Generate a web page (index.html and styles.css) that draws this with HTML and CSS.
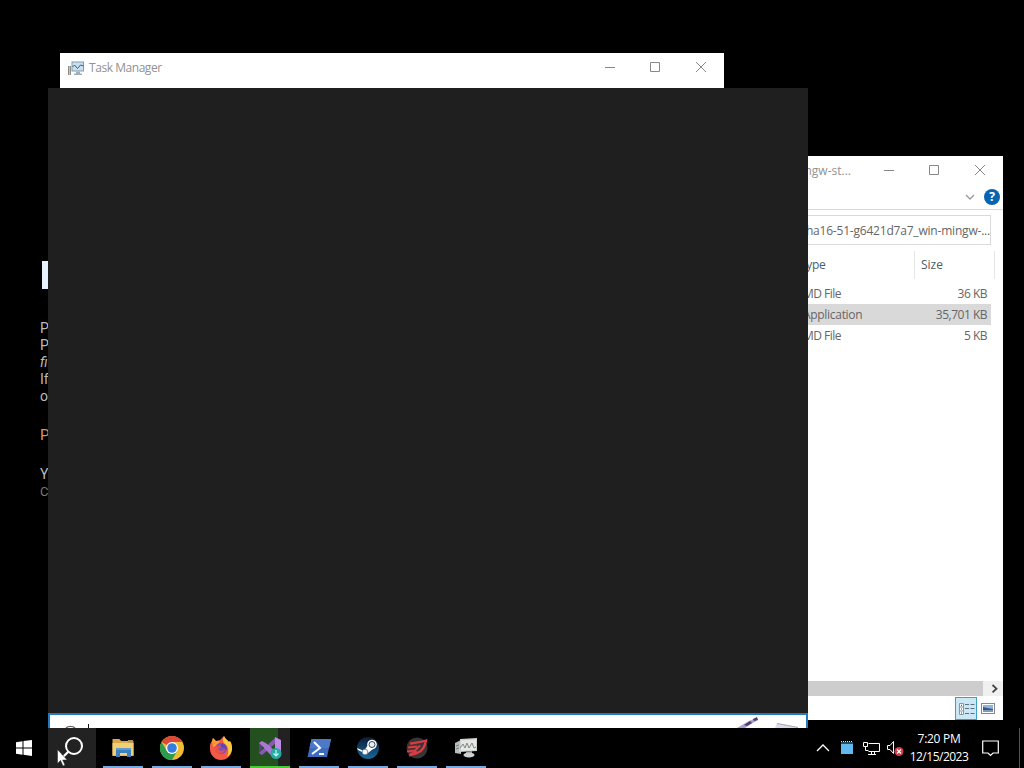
FILE: index.html
```
<!DOCTYPE html>
<html lang="en">
<head>
  <meta charset="UTF-8" />
  <title>Desktop</title>
  <link rel="stylesheet" href="styles.css">
</head>
<body>
  <div class="desktop">

    <div class="wallpaper-text">
      <div class="bar"></div>
      <p>P</p>
      <p>P</p>
      <p><i>fi</i></p>
      <p>If</p>
      <p>o</p>
      <p class="orange">P</p>
      <p class="yes">Y</p>
      <p class="dim">C</p>
    </div>

    <div class="window task-manager">
      <div class="titlebar">
        <svg class="app-icon" width="16" height="16" viewBox="0 0 16 16">
          <path d="M0 6h3v9H0z" fill="#c3c4bc"/><path d="M.5 6v9M2.500 6v9" stroke="#8c8d84"/>
          <rect x="4" y="2" width="11.500" height="9" fill="#c9dfef" stroke="#809bb2"/>
          <path d="M4.500 7l2-2 3 3.500 3-3.500 3 1" fill="none" stroke="#36617f"/>
          <path d="M8 11.500h4v2h2V15H6v-1.500h2z" fill="#a3adb8"/>
        </svg>
        <span class="title">Task Manager</span>
        <svg class="controls" width="105" height="14" viewBox="0 0 105 14">
          <path d="M1 6.500h10M46.500 1.500h9v9h-9zM92 1l10 10M102 1L92 11" fill="none" stroke="#888"/>
        </svg>
      </div>
    </div>

    <div class="window explorer">
      <div class="titlebar">
        <span class="title">mingw-st...</span>
        <svg class="controls" width="105" height="14" viewBox="0 0 105 14">
          <path d="M1 6.500h10M46.500 1.500h9v9h-9zM92 1l10 10M102 1L92 11" fill="none" stroke="#888"/>
        </svg>
      </div>
      <div class="ribbon">
        <svg width="10" height="8" viewBox="0 0 10 8"><path d="M1 2l4 4 4-4" fill="none" stroke="#999" stroke-width="1.300"/></svg>
        <span class="help">?</span>
      </div>
      <div class="address"><span>ha16-51-g6421d7a7_win-mingw-...</span></div>
      <div class="columns">
        <span class="type">Type</span>
        <span class="size">Size</span>
      </div>
      <div class="files">
        <div class="file"><span>MD File</span><span>36 KB</span></div>
        <div class="file selected"><span>Application</span><span>35,701 KB</span></div>
        <div class="file"><span>MD File</span><span>5 KB</span></div>
      </div>
      <div class="scrollbar">
        <div class="thumb"></div>
        <svg width="20" height="15" viewBox="0 0 20 15"><path d="M9.500 4l4 3.700-4 3.700" fill="none" stroke="#444" stroke-width="1.800"/></svg>
      </div>
      <div class="statusbar">
        <div class="view active">
          <svg width="20" height="20" viewBox="0 0 20 20">
            <path d="M3.500 4.500h4v11h-4zM3.500 8h4M3.500 12h4" fill="#fff" stroke="#8796a0"/>
            <path d="M5 6.300h1M5 10h1M5 14h1" stroke="#246"/>
            <path d="M9 5.500h4M14.500 5.500h4M9 9.500h4M14.500 9.500h4M9 14.500h4M14.500 14.500h4" stroke="#5d727d"/>
          </svg>
        </div>
        <div class="view">
          <svg width="14" height="12" viewBox="0 0 14 12">
            <rect x=".5" y=".5" width="13" height="10" fill="#fff" stroke="#888"/>
            <path d="M2 2h10v7H2z" fill="#8eb4e0"/><path d="M2 4l4 1 6 1v2H2z" fill="#36577e"/><path d="M2 7h10v2H2z" fill="#7e9bbb"/>
          </svg>
        </div>
      </div>
    </div>

    <div class="search-panel">
      <div class="search-box">
        <svg width="756" height="13" viewBox="0 0 756 13">
          <path d="M16 13a5 3 0 0 1 9 0" fill="none" stroke="#666" stroke-width="1.300"/>
          <path d="M38.500 9v4" stroke="#111"/>
          <path d="M687 13l12-7 7-3 2 2-7 4-6 4z" fill="#aaa0cc"/>
          <path d="M694 10l6-4 2 2-5 3zM703 4l4-2 1 3-4 1z" fill="#4d3d73"/>
          <path d="M727 8l21 4v1h-23z" fill="#dedceb"/><path d="M727 8.500l21 4" stroke="#a9a7b9"/>
        </svg>
      </div>
    </div>

    <div class="taskbar">
      <div class="start">
        <svg width="16" height="16" viewBox="0 0 16 16" fill="#fff"><path d="M0 2.300L6.500 1.300V7.500H0zM7.500 1.100L16 0V7.500H7.500zM0 8.500h6.500v6.200L0 13.700zM7.500 8.500H16V16l-8.500-1.200z"/></svg>
      </div>
      <div class="search">
        <svg width="48" height="40" viewBox="0 0 48 40"><circle cx="26" cy="18" r="8" fill="none" stroke="#fff" stroke-width="2"/><path d="M20.300 23.700L14 30" stroke="#fff" stroke-width="2.200"/></svg>
      </div>
      <div class="apps">
        <!-- file explorer -->
        <div class="app">
          <svg width="24" height="24" viewBox="0 0 24 24">
            <path d="M1.500 3h7l1.500 2h12.500v15h-21z" fill="#d9a94d"/>
            <path d="M1.500 7h21v12.500h-21z" fill="#f2cf72"/><path d="M17 4h5v2.500h-5z" fill="#a99465"/>
            <path d="M5 12h15v9h-4v-4H9v4H5z" fill="#3d80bd"/><path d="M5 12h15v2H5z" fill="#5b9fd0"/>
          </svg>
        </div>
        <!-- chrome -->
        <div class="app">
          <svg width="24" height="24" viewBox="0 0 24 24">
            <circle cx="12" cy="12" r="12" fill="#efbd32"/>
            <path d="M12 12L1.600 6A12 12 0 0 1 22.400 6H12z" fill="#dc493a"/>
            <path d="M1.600 6A12 12 0 0 0 12 24l5.200-9L12 18 6.800 15z" fill="#2b9c50"/>
            <circle cx="12" cy="12" r="6" fill="#fff"/><circle cx="12" cy="12" r="4.800" fill="#367ddd"/>
          </svg>
        </div>
        <!-- firefox -->
        <div class="app">
          <svg width="24" height="24" viewBox="0 0 24 24">
            <path d="M3 5l1-3 3 3 4-1 4-4c1 3 4 4 5 6l1-1c2 3 2 6 2 8A11 11 0 0 1 1 13C.6 9 1.500 7 3 5z" fill="#f35a43"/>
            <path d="M15 0c1 3 4 4 5 6l1-1c2 3 2 6 2 8a11 11 0 0 1-5 8c2-5 2-10-2-13-2-2-3-4-1-8z" fill="#ffc83e"/>
            <path d="M3 5l1-3 3 3 4 0-3 5-4 1z" fill="#ff9b32"/>
            <circle cx="12" cy="12.500" r="5.700" fill="#8050bd"/>
            <path d="M6 10c3 1 4-1 6 0l-3 3c2 3 5 2 7 0-1 5-7 6-10 2z" fill="#ee5046"/>
            <path d="M12 8c4-1 7 3 5 7-1-3-3-4-5-4z" fill="#6545ae"/>
          </svg>
        </div>
        <!-- visual studio installer -->
        <div class="app progress">
          <svg width="26" height="24" viewBox="0 0 26 24">
            <path d="M2 7v10l3 2V5z" fill="#5d3c85"/>
            <path d="M2 17l3 2L19 7V1z" fill="#8d58b5"/>
            <path d="M2 7l3-2c5 2 10 7 15 12l-3 5C11 17 8 12 2 7z" fill="#a978d2"/>
            <path d="M18 1l6 3v15l-6 3z" fill="#bf8be3"/>
            <circle cx="19" cy="17.500" r="5.500" fill="#27aaa5"/><path d="M19 14v6M16.500 17.500l2.500 2.500 2.500-2.500" fill="none" stroke="#bfffed" stroke-width="1.200"/>
          </svg>
        </div>
        <!-- powershell -->
        <div class="app">
          <svg width="24" height="24" viewBox="0 0 24 24">
            <path d="M4.500 3H24l-4 18H.5z" fill="#3f6bbd"/><path d="M4.500 3H24l-2 9H2.500z" fill="#4e79c9"/>
            <path d="M7 6l6 6-8 6M12 18h5" fill="none" stroke="#fff" stroke-width="2"/>
          </svg>
        </div>
        <!-- steam -->
        <div class="app">
          <svg width="24" height="24" viewBox="0 0 24 24">
            <defs><linearGradient id="steam" x2="0" y2="1"><stop stop-color="#0b1a35"/><stop offset="1" stop-color="#19689a"/></linearGradient></defs>
            <circle cx="12" cy="12" r="11" fill="url(#steam)"/>
            <path d="M1 12l7 3 4-6 5 4-5 4-2 1-8-4z" fill="#fff"/>
            <circle cx="16" cy="8.500" r="4.800" fill="#fff"/><circle cx="16" cy="8.500" r="3" fill="#e8eef5" stroke="#34475e"/>
            <circle cx="9" cy="16" r="2.800" fill="#fff" stroke="#5c7995" stroke-width=".8"/>
          </svg>
        </div>
        <!-- game launcher -->
        <div class="app">
          <svg width="24" height="24" viewBox="0 0 24 24">
            <circle cx="12" cy="12" r="10.500" fill="#393536"/>
            <path d="M5 7.500c6-1 10-1 16-3-1 6-3 10-8 12-3 2-6 2-9 3" fill="none" stroke="#dc3b43" stroke-width="2.300"/>
            <path d="M3 11.500l9-1M2 15.500l8-1 5-5M5 18l7-2" fill="none" stroke="#dc3b43" stroke-width="2"/>
          </svg>
        </div>
        <!-- task manager -->
        <div class="app">
          <svg width="24" height="24" viewBox="0 0 24 24">
            <path d="M1 7l6-3v14l-6-1z" fill="#b9bdba"/><path d="M2 10l3-1M2 13l3-1" stroke="#777"/>
            <path d="M6 3l17-1v13L5 16z" fill="#cdd1ce"/><path d="M7 4.500l15-1v10.500l-15 1z" fill="#e4e7e3"/>
            <path d="M6 12l3-4 2 4 2-5 2 5 3-5 2 5 2-1" fill="none" stroke="#7d8986"/>
            <path d="M12 16l6-1v3h-6z" fill="#969b98"/><ellipse cx="15" cy="19" rx="5.500" ry="2.500" fill="#cfd2cf"/>
          </svg>
        </div>
      </div>

      <div class="tray">
        <svg width="14" height="10" viewBox="0 0 14 10"><path d="M1 8l6-6 6 6" fill="none" stroke="#fff" stroke-width="1.300"/></svg>
        <svg width="12" height="14" viewBox="0 0 12 14"><path d="M0 1h12v12H0z" fill="#62b9ed"/><path d="M0 1h12v2H0z" fill="#244d68"/><path d="M0 .5h12" stroke="#bde7ff" stroke-dasharray="1 1"/></svg>
        <svg width="17" height="16" viewBox="0 0 17 16"><path d="M5.500 3.500h11v8h-11M.5 2.500h4v4h-4zM2.500 6.500v4h3M8.500 11.500v3M11.500 11.500v3M5 14.500h8" fill="none" stroke="#fff"/></svg>
        <svg width="17" height="16" viewBox="0 0 17 16"><path d="M.5 5.500H3l3.500-4v12L3 9.500H.5z" fill="none" stroke="#fff"/><circle cx="12" cy="11.500" r="4.500" fill="#d63b48"/><path d="M10 9.500l4 4M14 9.500l-4 4" stroke="#fff" stroke-width="1.200"/></svg>
      </div>
      <div class="clock">
        <div class="time">7:20 PM</div>
        <div class="date">12/15/2023</div>
      </div>
      <svg class="notifications" width="17" height="17" viewBox="0 0 17 17"><path d="M.7 1h15.600v12H11l-2.500 2.500L6 13H.7z" fill="none" stroke="#fff" stroke-width="1.200"/></svg>
      <div class="show-desktop"></div>
    </div>

    <svg class="cursor" width="12" height="18" viewBox="0 0 12 18"><path d="M.5.500v14l3-3 2.500 5.500 2-1-2.300-5h4.500z" fill="#fff" stroke="#222" stroke-width=".5"/></svg>
  </div>
</body>
</html>
```
FILE: styles.css
```
* {
  box-sizing: border-box;
}

body {
  margin: 0;
  background: #000;
  font-family: "Open Sans", "Noto Sans", sans-serif;
  font-size: 12px;
  overflow: hidden;
}

svg {
  display: block;
  flex: none;
}

.desktop {
  position: relative;
  width: 1024px;
  height: 768px;
  background: #000;
  overflow: hidden;
}

.wallpaper-text {
  position: absolute;
  left: 40px;
  top: 261px;
  width: 12px;
  font-family: Roboto, sans-serif;
  font-size: 14px;
  line-height: 17px;
  color: #bbb;
  white-space: nowrap;
}

.wallpaper-text .bar {
  width: 10px;
  height: 28px;
  margin: 0 0 31px 2px;
  background: #e8f2ff;
}

.wallpaper-text p {
  margin: 0;
}

.wallpaper-text .orange {
  margin-top: 22px;
  font-size: 15px;
  color: #d79562;
}

.wallpaper-text .yes {
  margin-top: 22px;
}

.wallpaper-text .dim {
  color: #777;
  font-size: 13px;
}

.window {
  position: absolute;
  background: #fff;
  color: #666;
}

.titlebar {
  display: flex;
  align-items: center;
  height: 29px;
}

.title {
  flex: 1;
  color: #929292;
  white-space: nowrap;
}

.task-manager {
  left: 60px;
  top: 53px;
  width: 664px;
  height: 40px;
  padding-left: 8px;
}

.task-manager .title {
  margin-left: 5px;
  letter-spacing: -0.45px;
}

.task-manager .controls,
.explorer .controls {
  margin-right: 15px;
}

.explorer {
  left: 790px;
  top: 156px;
  width: 213px;
  height: 564px;
  display: flex;
  flex-direction: column;
}

.explorer .title {
  text-align: right;
  margin-right: 32px;
}

.ribbon {
  display: flex;
  justify-content: flex-end;
  align-items: center;
  height: 25px;
  gap: 9px;
  padding-right: 3px;
  border-bottom: 1px solid #dadada;
}

.help {
  width: 16px;
  height: 16px;
  border-radius: 50%;
  background: #0864b1;
  color: #fff;
  font-weight: bold;
  line-height: 16px;
  text-align: center;
}

.address {
  display: flex;
  justify-content: flex-end;
  align-items: center;
  height: 30px;
  margin: 5px 12px 0 0;
  border: 1px solid #d9d9d9;
  letter-spacing: -0.2px;
  white-space: nowrap;
}

.columns {
  display: flex;
  height: 28px;
  margin: 6px 8px 4px 0;
  line-height: 28px;
  letter-spacing: -0.3px;
  color: #4c5c69;
}

.columns .type {
  width: 125px;
  padding-left: 10px;
  border-right: 1px solid #e5e5e5;
}

.columns .size {
  flex: 1;
  padding-left: 6px;
  letter-spacing: 0;
  border-right: 1px solid #e5e5e5;
}

.files {
  flex: 1;
}

.file {
  display: flex;
  justify-content: space-between;
  height: 21px;
  margin-right: 12px;
  padding: 0 4px 0 13px;
  line-height: 21px;
  letter-spacing: -0.5px;
}

.file.selected {
  background: #d9d9d9;
}

.file.selected span:first-child {
  letter-spacing: -0.3px;
}

.scrollbar {
  display: flex;
  height: 15px;
  background: #f0f0f0;
}

.scrollbar .thumb {
  flex: 1;
  background: #cdcdcd;
}

.statusbar {
  display: flex;
  justify-content: flex-end;
  height: 24px;
  padding: 1px 4px 0 0;
}

.view {
  display: flex;
  align-items: center;
  justify-content: center;
  width: 22px;
  height: 23px;
}

.view.active {
  background: #cce8f6;
  border: 1px solid #3e9fc2;
}

.search-panel {
  position: absolute;
  left: 48px;
  top: 88px;
  width: 760px;
  height: 640px;
  display: flex;
  flex-direction: column;
  justify-content: flex-end;
  background: #1f1f1f;
}

.search-box {
  height: 15px;
  background: #fff;
  border: 2px solid #2579bd;
  border-bottom: 0;
}

.taskbar {
  position: absolute;
  left: 0;
  bottom: 0;
  width: 100%;
  height: 40px;
  display: flex;
  align-items: center;
  background: #000;
  color: #fff;
}

.start {
  width: 48px;
  padding-left: 16px;
}

.search {
  width: 48px;
  background: #222;
}

.apps {
  display: flex;
  gap: 9px;
  margin-left: 7px;
}

.app {
  display: flex;
  align-items: center;
  justify-content: center;
  width: 40px;
  height: 40px;
  padding-top: 2px;
  border-bottom: 2px solid #76a9e0;
}

.app.progress {
  background: linear-gradient(to right, #245020 70%, #222 70%);
  border-bottom-color: #46cb35;
}

.tray {
  display: flex;
  align-items: center;
  gap: 10px;
  margin-left: auto;
}

.tray svg:nth-child(2) {
  margin-left: 1px;
}

.tray svg:nth-child(3) {
  margin-right: -3px;
}

.clock {
  width: 70px;
  text-align: center;
  line-height: 18px;
}

.time {
  letter-spacing: -0.3px;
}

.date {
  letter-spacing: -0.5px;
}

.notifications {
  margin: 0 20px 0 8px;
}

.show-desktop {
  width: 5px;
  height: 40px;
  border-left: 1px solid #555;
}

.cursor {
  position: absolute;
  left: 57px;
  top: 749px;
}
```
